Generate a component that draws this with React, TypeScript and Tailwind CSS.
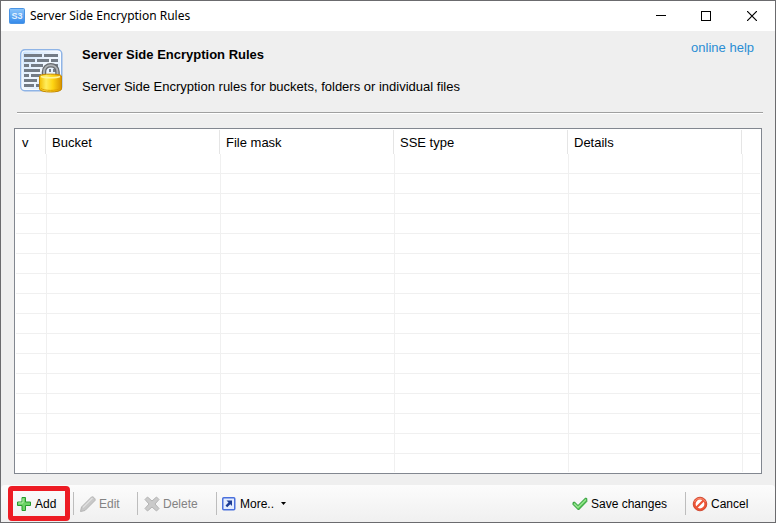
import React from 'react';

const columns = ['Bucket', 'File mask', 'SSE type', 'Details'];
const emptyRows = Array.from({ length: 15 }, (_, i) => i);

function AppIcon() {
  return (
    <svg className="h-4 w-4" viewBox="0 0 16 16" aria-hidden="true">
      <defs>
        <linearGradient id="app-bg" x1="0" y1="0" x2="0" y2="1">
          <stop offset="0" stopColor="#8cc6fb" />
          <stop offset="1" stopColor="#3389ea" />
        </linearGradient>
      </defs>
      <rect x="0.5" y="0.5" width="15" height="15" rx="1" fill="url(#app-bg)" stroke="#4a94e4" />
      <text x="8" y="11" textAnchor="middle" fontSize="9" fontWeight="bold" fontFamily="Liberation Sans, sans-serif" fill="#e3f1ff">
        S3
      </text>
    </svg>
  );
}

function RulesIcon() {
  return (
    <svg className="h-[46px] w-11" viewBox="0 0 44 46" aria-hidden="true">
      <defs>
        <linearGradient id="sheet" x1="0" y1="0" x2="1" y2="1">
          <stop offset="0" stopColor="#c5e0fc" />
          <stop offset="0.5" stopColor="#f2f8ff" />
          <stop offset="1" stopColor="#c5e0fb" />
        </linearGradient>
        <linearGradient id="lock-body" x1="0" y1="0" x2="1" y2="0">
          <stop offset="0" stopColor="#f3bd00" />
          <stop offset="0.3" stopColor="#ffed5c" />
          <stop offset="0.6" stopColor="#ffd512" />
          <stop offset="1" stopColor="#d99300" />
        </linearGradient>
      </defs>
      <rect x="0.75" y="2.75" width="41" height="41" rx="4" fill="url(#sheet)" stroke="#8fb4e6" strokeWidth="1.5" />
      <rect x="2" y="4" width="38.5" height="38.5" rx="3" fill="none" stroke="#fff" strokeOpacity="0.8" />
      <path
        d="M4 8.500h18M24 8.500h14M4 13.500h11M17 13.500h12M31 13.500h7M4 18.500h5M11 18.500h12M33 18.500h5M4 23.500h16M29 23.500h2M33 23.500h3M4 28.500h5M11 28.500h10M4 33.500h13M4 38.500h10M16 38.500h5"
        stroke="#747c86"
        strokeWidth="3"
      />
      <path d="M24 29v-4c0-9 13.500-9 13.500 0v4" fill="none" stroke="#666a6e" strokeWidth="4.500" />
      <path d="M24 29v-4c0-9 13.500-9 13.500 0v4" fill="none" stroke="#aeb2b5" strokeWidth="2" />
      <path d="M19.500 29c0-2.500 22-2.500 22 0v13c0 4-22 4-22 0z" fill="url(#lock-body)" stroke="#c88a00" />
      <path d="M21 29.500c3 1.500 16 1.500 19 0" fill="none" stroke="#fff49b" strokeWidth="1.500" />
      <path d="M21 41.500c3 2.500 16 2.500 19 0" fill="none" stroke="#e0a000" strokeWidth="1" />
    </svg>
  );
}

function PlusIcon() {
  return (
    <svg className="h-4 w-4" viewBox="0 0 16 16" aria-hidden="true">
      <path d="M6 1.500h3.500V6h5v3.500h-5v5H6v-5H1.500V6H6z" fill="#6cd365" stroke="#279b2c" strokeLinejoin="round" />
      <path d="M7 2.500v4.500H2.500" fill="none" stroke="#b4efab" />
    </svg>
  );
}

function PencilIcon() {
  return (
    <svg className="h-4 w-4" viewBox="0 0 16 16" aria-hidden="true">
      <path d="M0.500 15.500L1.500 11 11.500 1c1.500-1 4.500 2 3.500 3.500L5 14.500z" fill="#c8c8c8" stroke="#b4b4b4" strokeLinejoin="round" />
      <path d="M3 11.500L12.500 2" stroke="#dedede" strokeWidth="1.500" />
    </svg>
  );
}

function CrossIcon() {
  return (
    <svg className="h-4 w-4" viewBox="0 0 16 16" aria-hidden="true">
      <path
        d="M1 3.500L3.500 1 8 5l4.500-4L15 3.500 11 8l4 4.500-2.500 2.500L8 11l-4.500 4L1 12.500 5 8z"
        fill="#cacaca"
        stroke="#b4b4b4"
        strokeLinejoin="round"
      />
    </svg>
  );
}

function ShortcutIcon() {
  return (
    <svg className="h-[14px] w-[14px]" viewBox="0 0 14 14" aria-hidden="true">
      <rect x="0.75" y="0.75" width="12" height="12" rx="1" fill="#e4edff" stroke="#4a70dc" strokeWidth="1.5" />
      <path d="M4.500 3.500h5.500v5.500L8.300 7.300 5.200 10.300 3.500 8.600 6.500 5.500z" fill="#1d3c94" />
    </svg>
  );
}

function CheckIcon() {
  return (
    <svg className="h-4 w-4" viewBox="0 0 16 16" aria-hidden="true">
      <path d="M1 8.500V6.500l1.500-.5L6 9.500 13.500 2l1.300.5v3L6.500 14z" fill="#4fc24e" stroke="#2f9a3a" strokeLinejoin="round" />
      <path d="M2 7.500l4 4 8-8" fill="none" stroke="#98e690" strokeWidth="1.5" />
    </svg>
  );
}

function ForbiddenIcon() {
  return (
    <svg className="h-4 w-4" viewBox="0 0 16 16" aria-hidden="true">
      <circle cx="8" cy="8" r="6.8" fill="#ec5335" stroke="#c9381f" strokeWidth="0.8" />
      <circle cx="8" cy="8" r="4.4" fill="#fff" />
      <path d="M4.500 11.500l7-7" stroke="#ec5335" strokeWidth="2.2" />
      <path d="M2.500 6c1.500-4.500 8.500-5 11 0" fill="none" stroke="#ff9c80" strokeWidth="0.8" />
    </svg>
  );
}

function Divider() {
  return <span className="h-[23px] w-px bg-[#bdbdbd]" />;
}

export default function App() {
  return (
    <div className="flex min-h-screen flex-col border border-[#6b6b6e] bg-[#efefef] font-['Liberation_Sans',sans-serif] text-[13px] text-black">
      <header className="flex h-[30px] items-center bg-white pl-2">
        <AppIcon />
        <h1 className="ml-1 flex-1 pl-px font-['Noto_Sans',sans-serif] text-xs">Server Side Encryption Rules</h1>
        <button type="button" aria-label="Minimize" className="flex h-full w-[45px] items-center justify-center">
          <svg className="h-[10px] w-[10px]" viewBox="0 0 10 10" shapeRendering="crispEdges">
            <path d="M0 4.500h10" stroke="#000" />
          </svg>
        </button>
        <button type="button" aria-label="Maximize" className="flex h-full w-[45px] items-center justify-center">
          <svg className="h-[10px] w-[10px]" viewBox="0 0 10 10">
            <rect x="0.5" y="0.5" width="9" height="9" fill="none" stroke="#000" />
          </svg>
        </button>
        <button type="button" aria-label="Close" className="flex h-full w-[47px] items-center justify-center">
          <svg className="h-[10px] w-[10px]" viewBox="0 0 10 10">
            <path d="M0 0l10 10M10 0L0 10" stroke="#000" strokeWidth="1.2" />
          </svg>
        </button>
      </header>

      <main className="flex flex-1 flex-col">
        <section className="mr-3 ml-4 flex h-[82px] items-start border-b border-[#a0a0a0] pt-4 shadow-[0_1px_0_#fff]">
          <div className="ml-[3px]">
            <RulesIcon />
          </div>
          <div className="ml-[18px] flex-1">
            <h2 className="font-bold leading-4">Server Side Encryption Rules</h2>
            <p className="mt-4 leading-4">Server Side Encryption rules for buckets, folders or individual files</p>
          </div>
          <a href="#help" className="-mt-2 mr-[9px] leading-[18px] text-[#2a8dd4]">
            online help
          </a>
        </section>

        <div className="mx-[13px] mt-[15px] border border-[#828790] bg-white p-px">
          <table className="w-full table-fixed border-separate border-spacing-0">
            <colgroup>
              <col className="w-[31px]" />
              <col className="w-[174px]" />
              <col className="w-[174px]" />
              <col className="w-[174px]" />
              <col className="w-[174px]" />
              <col />
            </colgroup>
            <thead>
              <tr>
                <th className="p-0 pr-px text-left font-normal">
                  <div className="h-6 border-r border-[#e5e5e5] pl-[6px] leading-[26px]">v</div>
                </th>
                {columns.map((column) => (
                  <th key={column} className="p-0 pr-px text-left font-normal">
                    <div className="h-6 border-r border-[#e5e5e5] pl-[5px] leading-[26px]">{column}</div>
                  </th>
                ))}
                <td />
              </tr>
            </thead>
            <tbody>
              {emptyRows.map((row) => (
                <tr key={row} className="h-5">
                  <td className="border-r border-b border-[#f0f0f0] p-0" />
                  {columns.map((column) => (
                    <td key={column} className="border-r border-b border-[#f0f0f0] p-0" />
                  ))}
                  <td className="border-b border-[#f0f0f0] p-0" />
                </tr>
              ))}
              <tr className="h-[18px]">
                <td className="border-r border-[#f0f0f0] p-0" />
                {columns.map((column) => (
                  <td key={column} className="border-r border-[#f0f0f0] p-0" />
                ))}
                <td className="p-0" />
              </tr>
            </tbody>
          </table>
        </div>
      </main>

      <footer className="flex h-[37px] items-center rounded-t-sm bg-linear-to-b from-[#fcfcfc] to-[#f0f0f0] text-xs">
        <button type="button" className="relative flex h-[35px] w-[72px] items-center gap-[3px] pl-[15px]">
          <PlusIcon />
          Add
          <span className="absolute top-0 left-[7px] h-[35px] w-[62px] rounded-[4px] border-[5px] border-[#ed1c24]" />
        </button>
        <Divider />
        <button type="button" disabled className="flex h-6 w-[63px] items-center gap-[3px] pl-[6px] text-[#838383]">
          <PencilIcon />
          Edit
        </button>
        <Divider />
        <button type="button" disabled className="flex h-6 w-[78px] items-center gap-[3px] pl-[6px] text-[#838383]">
          <CrossIcon />
          Delete
        </button>
        <Divider />
        <button type="button" className="flex h-6 items-center gap-1 pl-[5px]">
          <ShortcutIcon />
          More..
          <svg className="ml-[3px] h-[3px] w-[5px]" viewBox="0 0 5 3" aria-hidden="true">
            <path d="M0 0h5L2.500 3z" fill="#000" />
          </svg>
        </button>
        <div className="flex-1" />
        <button type="button" className="flex h-6 w-[113px] items-center gap-[3px]">
          <CheckIcon />
          Save changes
        </button>
        <Divider />
        <button type="button" className="flex h-6 w-[89px] items-center gap-[3px] pl-[6px]">
          <ForbiddenIcon />
          Cancel
        </button>
      </footer>
    </div>
  );
}
